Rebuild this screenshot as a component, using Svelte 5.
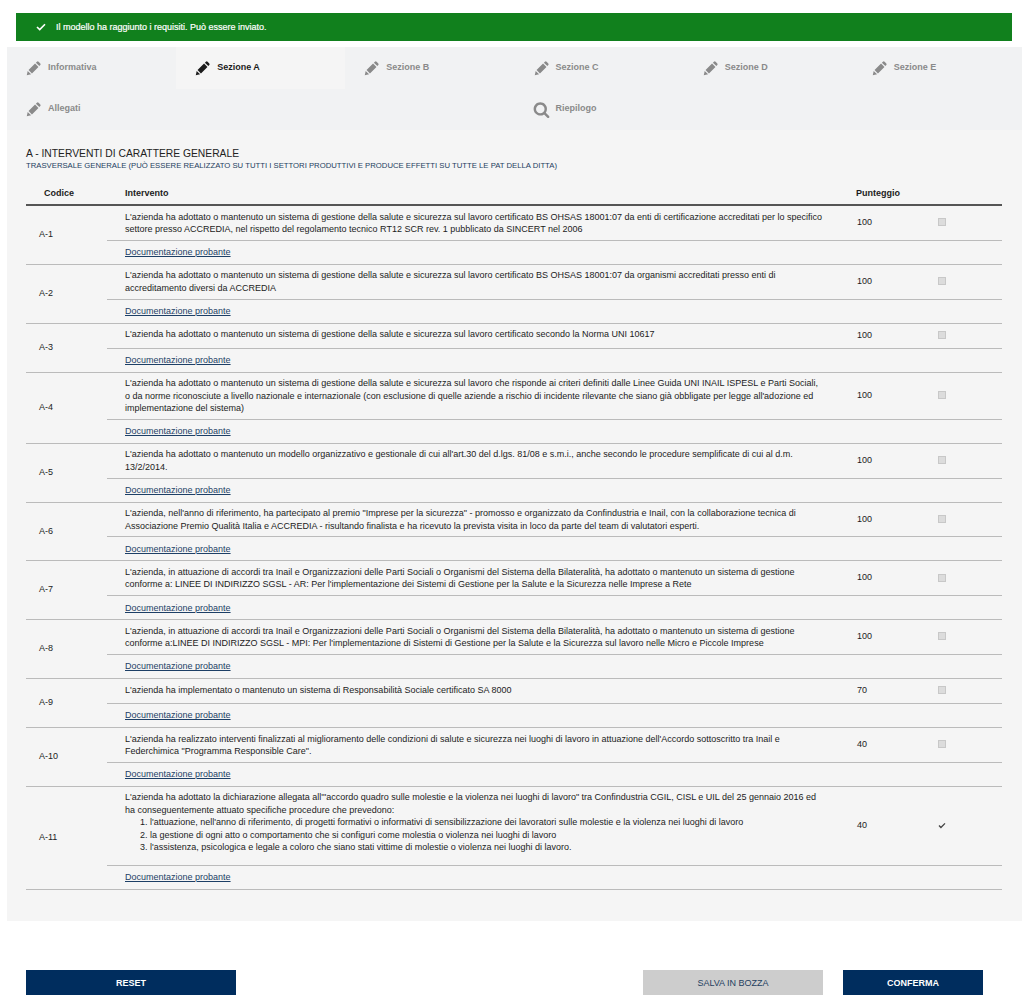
<script lang="ts">
	const doc = "Documentazione probante";
	const PENCIL = "M2.5 21.5 L3.8 15.4 L8.6 20.2 Z M5 14.2 L14.2 5 L19 9.8 L9.8 19 Z M15.4 3.8 L16.8 2.4 Q18 1.4 19.2 2.4 L21.6 4.8 Q22.6 6 21.6 7.2 L20.2 8.6 Z";
	const SEARCH = "M1216 832q0-185-131.5-316.5t-316.5-131.5-316.5 131.5-131.5 316.5 131.5 316.5 316.5 131.5 316.5-131.5 131.5-316.5zm512 832q0 52-38 90t-90 38q-54 0-90-38l-343-342q-179 124-399 124-143 0-273.5-55.5t-225-150-150-225-55.5-273.5 55.5-273.5 150-225 225-150 273.5-55.5 273.5 55.5 225 150 150 225 55.5 273.5q0 220-124 399l343 343q37 37 37 90z";

	const tabs = [
		{ label: "Informativa" },
		{ label: "Sezione A", active: true },
		{ label: "Sezione B" },
		{ label: "Sezione C" },
		{ label: "Sezione D" },
		{ label: "Sezione E" },
		{ label: "Allegati" },
		{ blank: true },
		{ blank: true },
		{ label: "Riepilogo", search: true }
	];

	const rows = [
		{ code: "A-1", score: 100, text: "L'azienda ha adottato o mantenuto un sistema di gestione della salute e sicurezza sul lavoro certificato BS OHSAS 18001:07 da enti di certificazione accreditati per lo specifico settore presso ACCREDIA, nel rispetto del regolamento tecnico RT12 SCR rev. 1 pubblicato da SINCERT nel 2006" },
		{ code: "A-2", score: 100, text: "L'azienda ha adottato o mantenuto un sistema di gestione della salute e sicurezza sul lavoro certificato BS OHSAS 18001:07 da organismi accreditati presso enti di accreditamento diversi da ACCREDIA" },
		{ code: "A-3", score: 100, text: "L'azienda ha adottato o mantenuto un sistema di gestione della salute e sicurezza sul lavoro certificato secondo la Norma UNI 10617" },
		{ code: "A-4", score: 100, text: "L'azienda ha adottato o mantenuto un sistema di gestione della salute e sicurezza sul lavoro che risponde ai criteri definiti dalle Linee Guida UNI INAIL ISPESL e Parti Sociali, o da norme riconosciute a livello nazionale e internazionale (con esclusione di quelle aziende a rischio di incidente rilevante che siano già obbligate per legge all'adozione ed implementazione del sistema)" },
		{ code: "A-5", score: 100, text: "L'azienda ha adottato o mantenuto un modello organizzativo e gestionale di cui all'art.30 del d.lgs. 81/08 e s.m.i., anche secondo le procedure semplificate di cui al d.m. 13/2/2014." },
		{ code: "A-6", score: 100, text: "L'azienda, nell'anno di riferimento, ha partecipato al premio \"Imprese per la sicurezza\" - promosso e organizzato da Confindustria e Inail, con la collaborazione tecnica di Associazione Premio Qualità Italia e ACCREDIA - risultando finalista e ha ricevuto la prevista visita in loco da parte del team di valutatori esperti." },
		{ code: "A-7", score: 100, text: "L'azienda, in attuazione di accordi tra Inail e Organizzazioni delle Parti Sociali o Organismi del Sistema della Bilateralità, ha adottato o mantenuto un sistema di gestione conforme a: LINEE DI INDIRIZZO SGSL - AR: Per l'implementazione dei Sistemi di Gestione per la Salute e la Sicurezza nelle Imprese a Rete" },
		{ code: "A-8", score: 100, text: "L'azienda, in attuazione di accordi tra Inail e Organizzazioni delle Parti Sociali o Organismi del Sistema della Bilateralità, ha adottato o mantenuto un sistema di gestione conforme a:LINEE DI INDIRIZZO SGSL - MPI: Per l'implementazione di Sistemi di Gestione per la Salute e la Sicurezza sul lavoro nelle Micro e Piccole Imprese" },
		{ code: "A-9", score: 70, text: "L'azienda ha implementato o mantenuto un sistema di Responsabilità Sociale certificato SA 8000" },
		{ code: "A-10", score: 40, text: "L'azienda ha realizzato interventi finalizzati al miglioramento delle condizioni di salute e sicurezza nei luoghi di lavoro in attuazione dell'Accordo sottoscritto tra Inail e Federchimica \"Programma Responsible Care\"." },
		{
			code: "A-11",
			score: 40,
			checked: true,
			text: "L'azienda ha adottato la dichiarazione allegata all'\"accordo quadro sulle molestie e la violenza nei luoghi di lavoro\" tra Confindustria CGIL, CISL e UIL del 25 gennaio 2016 ed ha conseguentemente attuato specifiche procedure che prevedono:",
			list: [
				"l'attuazione, nell'anno di riferimento, di progetti formativi o informativi di sensibilizzazione dei lavoratori sulle molestie e la violenza nei luoghi di lavoro",
				"la gestione di ogni atto o comportamento che si configuri come molestia o violenza nei luoghi di lavoro",
				"l'assistenza, psicologica e legale a coloro che siano stati vittime di molestie o violenza nei luoghi di lavoro."
			]
		}
	];
</script>

<div class="page">
	<div class="alert">
		<svg class="alert-check" viewBox="0 0 12 10" aria-hidden="true"><path d="M1 5 L4.4 8.2 L11 1.6" /></svg>
		<span>Il modello ha raggiunto i requisiti. Può essere inviato.</span>
	</div>

	<div class="panel">
		<nav class="tabs">
			{#each tabs as tab}
				{#if tab.blank}
					<div></div>
				{:else}
					<div class="tab" class:active={tab.active}>
						{#if tab.search}
							<svg class="icon" viewBox="0 0 1792 1792" aria-hidden="true"><path d={SEARCH} /></svg>
						{:else}
							<svg class="icon" viewBox="0 0 24 24" aria-hidden="true"><path d={PENCIL} /></svg>
						{/if}
						<span>{tab.label}</span>
					</div>
				{/if}
			{/each}
		</nav>

		<section class="content">
			<h2>A - INTERVENTI DI CARATTERE GENERALE</h2>
			<p class="sub">TRASVERSALE GENERALE (PUÒ ESSERE REALIZZATO SU TUTTI I SETTORI PRODUTTIVI E PRODUCE EFFETTI SU TUTTE LE PAT DELLA DITTA)</p>

			<table>
				<colgroup>
					<col class="c-code" />
					<col />
					<col class="c-score" />
					<col class="c-check" />
				</colgroup>
				<thead>
					<tr>
						<th class="th-code">Codice</th>
						<th class="pad">Intervento</th>
						<th>Punteggio</th>
						<th></th>
					</tr>
				</thead>
				<tbody>
					{#each rows as row}
						<tr class="main">
							<td class="code" rowspan="2">{row.code}</td>
							<td class="pad text">
								{row.text}
								{#if row.list}
									<ol>
										{#each row.list as item}
											<li>{item}</li>
										{/each}
									</ol>
								{/if}
							</td>
							<td class="score">{row.score}</td>
							<td class="check">
								{#if row.checked}
									<svg class="tick" viewBox="0 0 12 10" aria-hidden="true"><path d="M1.5 5 L4.4 8 L10.5 1.8" /></svg>
								{:else}
									<span class="box"></span>
								{/if}
							</td>
						</tr>
						<tr class="doc">
							<td class="pad" colspan="3"><a href="#doc">{doc}</a></td>
						</tr>
					{/each}
				</tbody>
			</table>
		</section>
	</div>

	<div class="actions">
		<button class="primary reset">RESET</button>
		<button class="draft">SALVA IN BOZZA</button>
		<button class="primary confirm">CONFERMA</button>
	</div>
</div>

<style>
	:global(body) {
		background: #fff;
		font-family: "Liberation Sans", Arial, sans-serif;
		color: #1c1c1c;
	}

	.page {
		padding-top: 13px;
		height: 1005px;
		box-sizing: border-box;
		overflow: hidden;
	}

	.alert {
		display: flex;
		align-items: center;
		gap: 10px;
		height: 28px;
		margin: 0 12px 0 16px;
		padding-left: 20px;
		background: #11801d;
		color: #fff;
		font-size: 9px;
		-webkit-text-stroke: 0.2px #fff;
	}

	.alert-check {
		width: 10px;
		height: 8px;
		fill: none;
		stroke: #fff;
		stroke-width: 2;
	}

	.panel {
		margin: 6px 2px 0 7px;
		height: 874px;
		background: #f5f5f5;
	}

	.tabs {
		display: grid;
		grid-template-columns: repeat(6, 1fr);
		grid-template-rows: 42px 41px;
		background: #f1f2f3;
		color: #8a8a8a;
		font-size: 9px;
		font-weight: 700;
	}

	.tab {
		display: flex;
		align-items: center;
		gap: 6px;
		padding-left: 18px;
	}

	.tab span {
		margin-top: -3px;
	}

	.tab.active {
		background: #f5f5f5;
		color: #1c1c1c;
	}

	.icon {
		width: 17px;
		height: 17px;
		fill: currentColor;
		flex: none;
	}

	.content {
		padding: 18px 20px 0 19px;
	}

	h2 {
		margin: 0;
		font-size: 10.3px;
		font-weight: 400;
		line-height: 12px;
		color: #222;
	}

	.sub {
		margin: 0;
		font-size: 7.72px;
		line-height: 11px;
		color: #24405f;
	}

	table {
		width: 976px;
		margin-top: 9px;
		border-collapse: collapse;
		table-layout: fixed;
		font-size: 9px;
		line-height: 12.4px;
	}

	.c-code { width: 81px; }
	.c-score { width: 81px; }
	.c-check { width: 65px; }

	th {
		height: 22px;
		padding: 2px 0 0;
		text-align: left;
		font-weight: 700;
		font-size: 9px;
		border-bottom: 2px solid #555;
	}

	th.th-code,
	th.pad {
		padding-left: 18px;
	}

	.pad {
		padding-left: 18px;
	}

	.main td {
		padding-top: 4.5px;
		padding-bottom: 4.5px;
		height: 15px;
		border-bottom: 1px solid #bbb;
	}

	.main td.score,
	.main td.check {
		height: 13.5px;
		padding-bottom: 6px;
	}

	.main td.text {
		padding-right: 33px;
		vertical-align: top;
	}

	.main td.code {
		padding-top: 3px;
		padding-left: 13px;
		color: #222;
	}

	.box {
		display: block;
		width: 8px;
		height: 8px;
		background: #dcdcdc;
		border: 1px solid #c8c8c8;
		box-sizing: border-box;
	}

	.tick {
		display: block;
		width: 8px;
		height: 7px;
		fill: none;
		stroke: #444;
		stroke-width: 2;
	}

	.doc td {
		height: 23px;
		padding-top: 0;
		padding-bottom: 0;
		border-bottom: 1px solid #bbb;
	}

	a {
		color: #1d3f66;
		text-decoration: underline;
	}

	ol {
		margin: 0 0 7px;
		padding-left: 25px;
	}

	.actions {
		display: flex;
		margin: 49px 0 0 26px;
	}

	button {
		height: 25px;
		border: 0;
		padding: 0;
		font-family: inherit;
		font-size: 9px;
		border-radius: 0;
	}

	.primary {
		background: #002d5e;
		color: #fff;
		font-weight: 700;
	}

	.reset { width: 210px; }

	.draft {
		width: 180px;
		margin-left: 407px;
		background: #cdcdcd;
		color: #24405f;
	}

	.confirm {
		width: 140px;
		margin-left: 20px;
	}
</style>
